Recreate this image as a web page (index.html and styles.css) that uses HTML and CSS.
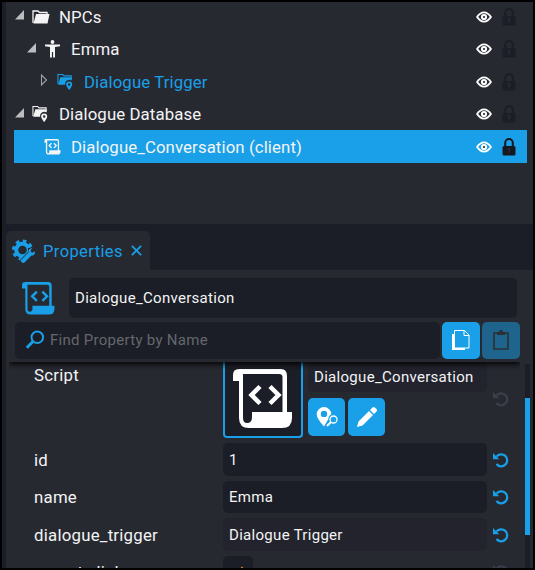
FILE: index.html
```html
<!DOCTYPE html>
<html lang="en">
<head>
<meta charset="utf-8">
<title>Properties</title>
<link rel="stylesheet" href="styles.css">
</head>
<body>
<svg class="defs" aria-hidden="true">
  <symbol id="open" viewBox="0 0 10 10"><path d="M9 0v9.500H0z"/></symbol>
  <symbol id="closed" viewBox="0 0 8 12"><path d="M1.500 1v10L6.500 6z" fill="none" stroke="currentColor" stroke-width="1.100"/></symbol>
  <symbol id="folder" viewBox="0 0 18 14"><path d="M1 13V1h5l1.500 1.500H15V4" fill="none" stroke="currentColor" stroke-width="1.300"/><path d="M4 4h13.500l-2 9.500H1.500z"/></symbol>
  <symbol id="folderpin" viewBox="0 0 18 18"><path d="M1 11V1h5l1.300 1.500H15V4" fill="none" stroke="currentColor" stroke-width="1.100"/><path d="M3.600 4H16l-.6 3.500a4.400 4.400 0 0 0-6.800 4.500H1.200z"/><path fill-rule="evenodd" d="M12.900 8.400a3.200 3.200 0 0 1 3.200 3.200c0 2-3.200 5.900-3.200 5.900s-3.200-3.900-3.200-5.900a3.200 3.200 0 0 1 3.200-3.200zm0 1.900a1.300 1.300 0 1 0 0 2.600 1.300 1.300 0 0 0 0-2.600z"/></symbol>
  <symbol id="person" viewBox="0 0 16 18"><circle cx="8" cy="2" r="1.900"/><path d="M.5 4.500 6 4.400h4l5.500.1v1.800L10.500 7v10.500H8.600V12H7.400v5.500H5.500V7L.5 6.300z"/></symbol>
  <symbol id="script" viewBox="0 0 60 60"><path fill-rule="evenodd" d="M6 0H48Q54 0 54 7V43H59V49Q59 59 49 59H16Q6 59 6 49V12H0V6Q0 0 6 0zM10 5V49Q10 54 14 54 19 54 19 48V43H49.500V8Q49.500 5 46 5z"/><path d="m27 17.500-8.500 8.500 8.500 8.500M37 17.500l8.500 8.500-8.500 8.500" fill="none" stroke="currentColor" stroke-width="4.500"/></symbol>
  <symbol id="script-small" viewBox="0 0 18 18"><path fill-rule="evenodd" d="M2 .5H14Q16 .5 16 3V12.500H17.500V14Q17.500 17 14.500 17H5Q2 17 2 14V4.500H.5V2.500Q.5.500 2 .5zM3.400 2V14Q3.400 15.500 4.500 15.500 5.600 15.500 5.600 14V12.500H14.600V3Q14.600 2 13.600 2z"/><path d="M8 5 5.500 7.500 8 10M10.500 5 13 7.500 10.500 10" fill="none" stroke="currentColor" stroke-width="1.400"/></symbol>
  <symbol id="eye" viewBox="0 0 18 12"><path fill-rule="evenodd" d="M1 6Q4.500.5 9 .5T17 6q-3.500 5.500-8 5.500T1 6zm2.200 0Q6 9.700 9 9.700T14.800 6Q12 2.300 9 2.300T3.200 6z"/><circle cx="9" cy="6" r="3.100"/><circle cx="9" cy="6" r="1.100" class="pupil"/></symbol>
  <symbol id="lock" viewBox="0 0 14 18"><path d="M3.200 9V5a3.800 4 0 0 1 7.600 0v4" fill="none" stroke="currentColor" stroke-width="2"/><rect x=".5" y="8" width="13" height="9.500" rx="1.500"/><path class="key" d="M5.600 10h2.800v2.200H7.900V15H6.300v-2.800h-.7z"/></symbol>
  <symbol id="gear" viewBox="0 0 24 24"><circle cx="10.500" cy="11" r="6.300" fill="none" stroke="currentColor" stroke-width="4"/><circle cx="10.500" cy="11" r="9" fill="none" stroke="currentColor" stroke-width="3.200" stroke-dasharray="3.600 3.470"/><path class="cut" d="m8 21 8-8 0-4h8v7l-5 3-6 6z"/><path d="m9.500 20.500 7-7q-.5-4 3.500-4.500l-1.500 3 1.500 1.700 3-1.200q.3 4-3.800 4.300l-6.700 6.700q-1.500 1-3-.5-1.200-1.500 0-2.500z"/></symbol>
  <symbol id="search" viewBox="0 0 20 20"><circle cx="12.300" cy="7.300" r="5.800" fill="none" stroke="currentColor" stroke-width="2"/><path d="m8 11.500-6.200 6.200" fill="none" stroke="currentColor" stroke-width="3"/></symbol>
  <symbol id="copy" viewBox="0 0 18 20"><path d="M0 4h2.500v14H13v2H0z"/><path d="M2.500.5h10L17 5v13H2.500zM12 .5v5h5" fill="none" stroke="currentColor"/></symbol>
  <symbol id="paste" viewBox="0 0 16 20"><path d="M1 3h14v16H1z" fill="none" stroke="currentColor" stroke-width="1.600"/><path d="M4 2h2l1-2h2l1 2h2v3H4z"/></symbol>
  <symbol id="locate" viewBox="0 0 22 22"><path fill-rule="evenodd" d="M8 1a7.300 7.300 0 0 1 7.300 7.300q-3 1.500-3 5L8 20.500Q.7 12.500.7 8.300A7.300 7.300 0 0 1 8 1zm0 3.700a3.200 3.200 0 1 0 0 6.400 3.200 3.200 0 0 0 0-6.400z"/><circle cx="17.500" cy="13.500" r="3.500" fill="none" stroke="currentColor" stroke-width="1.300"/><path d="m15 16-4 4" stroke="currentColor" stroke-width="2"/></symbol>
  <symbol id="pencil" viewBox="0 0 20 20"><path d="m0 20 1.500-5.500L12 4l4 4L5.500 18.500zM13 3l2.500-2.500q1.200-1 2.400 0l1.600 1.600q1 1.200 0 2.400L17 7z"/></symbol>
  <symbol id="reset" viewBox="0 0 16 16"><path d="M3.500 4.600A6 6 0 1 1 3.500 12" fill="none" stroke="currentColor" stroke-width="2.300"/><path d="M0 1v6.200h6.200z"/></symbol>
</svg>

<main class="editor">
  <section class="tree">
    <div class="node d0"><svg class="arrow"><use href="#open"/></svg><svg class="folder"><use href="#folder"/></svg><span>NPCs</span><svg class="eye"><use href="#eye"/></svg><svg class="lock"><use href="#lock"/></svg></div>
    <div class="node d1"><svg class="arrow"><use href="#open"/></svg><svg class="kind"><use href="#person"/></svg><span>Emma</span><svg class="eye"><use href="#eye"/></svg><svg class="lock"><use href="#lock"/></svg></div>
    <div class="node d2 linked"><svg class="arrow closed"><use href="#closed"/></svg><svg class="kind"><use href="#folderpin"/></svg><span>Dialogue Trigger</span><svg class="eye"><use href="#eye"/></svg><svg class="lock"><use href="#lock"/></svg></div>
    <div class="node d0"><svg class="arrow"><use href="#open"/></svg><svg class="kind"><use href="#folderpin"/></svg><span>Dialogue Database</span><svg class="eye"><use href="#eye"/></svg><svg class="lock"><use href="#lock"/></svg></div>
    <div class="node d1 selected"><i class="arrow"></i><svg class="kind"><use href="#script-small"/></svg><span>Dialogue_Conversation (client)</span><svg class="eye"><use href="#eye"/></svg><svg class="lock"><use href="#lock"/></svg></div>
  </section>

  <nav class="tabs">
    <div class="tab"><svg class="gear"><use href="#gear"/></svg><span>Properties</span><svg class="close" viewBox="0 0 12 12"><path d="m1 1 10 10M11 1 1 11" stroke="currentColor" stroke-width="2"/></svg></div>
  </nav>

  <section class="panel">
    <header class="head">
      <div class="title"><svg class="big"><use href="#script"/></svg><div class="field name">Dialogue_Conversation</div></div>
      <div class="tools">
        <div class="search"><svg><use href="#search"/></svg><span>Find Property by Name</span></div>
        <div class="btn"><svg class="copy"><use href="#copy"/></svg></div>
        <div class="btn off"><svg class="paste"><use href="#paste"/></svg></div>
      </div>
    </header>
    <div class="body">
      <div class="props">
        <div class="row asset">
          <label>Script</label>
          <div class="thumb"><svg><use href="#script"/></svg></div>
          <div class="pick">
            <div class="field ref">Dialogue_Conversation</div>
            <div class="acts"><div class="btn"><svg class="locate"><use href="#locate"/></svg></div><div class="btn"><svg class="pencil"><use href="#pencil"/></svg></div></div>
          </div>
          <svg class="reset dim"><use href="#reset"/></svg>
        </div>
        <div class="row"><label>id</label><div class="field">1</div><svg class="reset"><use href="#reset"/></svg></div>
        <div class="row"><label>name</label><div class="field">Emma</div><svg class="reset"><use href="#reset"/></svg></div>
        <div class="row"><label>dialogue_trigger</label><div class="field ref">Dialogue Trigger</div><svg class="reset"><use href="#reset"/></svg></div>
        <div class="row last"><label>parent_dialogue</label><div class="check"><svg viewBox="0 0 12 12"><path d="m1 7 3.500 3.500L10.500 1" fill="none" stroke="currentColor" stroke-width="2"/></svg></div><svg class="reset dim"><use href="#reset"/></svg></div>
      </div>
      <div class="scroll"><div class="handle"></div></div>
    </div>
  </section>
</main>
</body>
</html>
```
FILE: styles.css
```css
* { box-sizing: border-box; }
body { margin: 0; width: 535px; height: 570px; overflow: hidden; background: #000; color: #f4f4f5; font: 16.8px/20px Roboto, "Liberation Sans", sans-serif; }
svg { display: block; flex: none; fill: currentColor; }
.defs { width: 0; height: 0; position: absolute; }
.editor { width: 531px; height: 566px; margin: 2px; padding-left: 4px; background: #1b1e26; display: flex; flex-direction: column; overflow: hidden; }

.tree { height: 222px; flex: none; background: #272931; padding: 0 6px 0 8px; }
.node { height: 32.500px; display: flex; align-items: center; padding-right: 11px; letter-spacing: .1px; }
.node:first-child { margin-top: -1.600px; }
.node span { flex: 1; white-space: nowrap; }
.d1 { padding-left: 12px; }
.d2 { padding-left: 25px; }
.arrow { width: 10px; height: 10px; margin: 0 7px 3px 1px; color: #bdbdbf; }
.closed { width: 8px; height: 12px; margin: 0 9px 3px 1px; color: #a0a1a5; }
.kind { width: 17px; height: 18px; margin-right: 10px; }
.folder { width: 18px; height: 14px; margin-right: 9px; }
.linked span, .linked .kind { color: #199fe7; }
.eye { width: 18px; height: 12px; margin-right: 9px; color: #fff; }
.pupil { fill: #272931; }
.lock { width: 14px; height: 18px; color: #1b1e26; }
.key { fill: #272931; }
.selected { background: #19a0e8; height: 33px; }
.selected .lock { color: #15181f; }
.selected .pupil, .selected .key { fill: #19a0e8; }

.tabs { height: 46px; flex: none; display: flex; align-items: flex-end; }
.tab { width: 144px; height: 39px; background: #272931; border-radius: 5px 5px 0 0; display: flex; align-items: center; padding-left: 6px; color: #199fe7; font-size: 16.500px; letter-spacing: .4px; }
.tab span { width: 79px; white-space: nowrap; margin: 2px 9px 0 7px; }
.gear { width: 24px; height: 24px; }
.cut { fill: #272931; }
.close { width: 11px; height: 11px; }

.panel { flex: 1; min-height: 0; background: #272931; display: flex; flex-direction: column; }
.head { height: 92px; flex: none; padding-top: 8px; margin: 0 13px 0 3px; background: #272931; position: relative; z-index: 1; box-shadow: 0 2px 6px #000; clip-path: inset(0 0 -8px 0); }
.title { display: flex; align-items: center; padding-left: 13px; gap: 14px; }
.big { width: 33px; height: 33px; color: #199fe7; }
.field { font-size: 15px; letter-spacing: .3px; background: #1b1e26; border-radius: 5px; padding-left: 6px; display: flex; align-items: center; white-space: nowrap; }
.name { width: 448px; height: 40px; }
.tools { display: flex; gap: 2px; margin: 4px 0 0 6px; }
.search { width: 425px; height: 37px; background: #1b1e26; border-radius: 5px; display: flex; align-items: center; gap: 5px; padding: 0 0 2px 10px; color: #65676d; font-size: 15px; letter-spacing: .28px; }
.search svg { width: 20px; height: 20px; color: #199fe7; }
.btn { width: 38px; height: 37px; border-radius: 5px; background: #19a0e8; color: #fff; display: flex; align-items: center; justify-content: center; }
.off { background: #1e648c; color: #2c3036; }
.copy { width: 18px; height: 20px; margin: 0 1px 1px 0; }
.paste { width: 16px; height: 20px; margin-bottom: 1px; }

.body { flex: 1; min-height: 0; display: flex; overflow: hidden; }
.props { width: 519px; padding-left: 28px; flex: none; }
.row { display: flex; align-items: center; height: 32.500px; margin-bottom: 5px; }
.row label { width: 189px; flex: none; letter-spacing: .24px; }
.row > .field { width: 264px; height: 32.500px; }
.field.ref { background: #22232d; }
.reset { width: 16px; height: 16px; margin-left: 6px; color: #199fe7; }
.dim { color: #3a3f4c; }
.asset { height: 76px; align-items: flex-start; margin-bottom: 5.400px; }
.asset label { padding-top: 3px; }
.thumb { width: 80px; height: 76px; background: #1b1e26; border: 2px solid #199fe7; border-top: 0; border-radius: 0 0 4px 4px; padding: 7px 0 0 8px; }
.thumb svg { width: 60px; height: 60px; color: #fff; }
.pick { width: 179px; margin-left: 5px; }
.pick .field { height: 30px; }
.acts { display: flex; gap: 3px; margin-top: 6px; }
.acts .btn { width: 37px; height: 38px; }
.locate { width: 22px; height: 22px; }
.pencil { width: 20px; height: 20px; }
.asset .reset { margin-top: 29px; }
.check { width: 30px; height: 32px; margin-right: 234px; border-radius: 5px; background: #1b1e26; display: flex; align-items: center; justify-content: center; color: #cb8128; }
.check svg { width: 12px; height: 12px; margin: 0; }
.scroll { width: 5px; margin: 2px 0 0; background: #1b1e26; padding-top: 34px; height: 210px; }
.handle { height: 137px; background: #19a0e8; }
```
